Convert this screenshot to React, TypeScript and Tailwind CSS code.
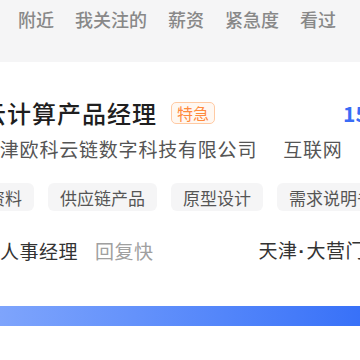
const tabs = ["附近", "我关注的", "薪资", "紧急度", "看过"];
const skills = ["产品资料", "供应链产品", "原型设计", "需求说明书"];

export default function App() {
  return (
    <div
      className="w-[360px] h-[360px] overflow-hidden bg-white"
      style={{ fontFamily: '"Noto Sans CJK SC", "Noto Sans", sans-serif' }}
    >
      {/* 顶部筛选栏 */}
      <div className="h-[62px] bg-[#f5f5f6]">
        <div className="flex items-center h-[38px] pl-[18px] gap-[21px] whitespace-nowrap">
          {tabs.map((t) => (
            <span key={t} className="text-[18px] font-medium text-[#888] leading-none">
              {t}
            </span>
          ))}
        </div>
      </div>

      {/* 职位卡片 */}
      <div className="flex flex-col whitespace-nowrap">
        <div className="flex items-center h-[34px] mt-[34px] ml-[-18px]">
          <span className="text-[24px] tracking-[1px] font-medium text-[#1f1f1f] leading-none">
            云计算产品经理
          </span>
          <span className="ml-[14px] h-[22px] px-[5px] flex items-center rounded-[5px] border border-[#ffcaa3] bg-[#fff8f2] text-[16px] leading-none text-[#ff8a3d]">
            特急
          </span>
          <span className="ml-[128px] text-[21px] font-semibold text-[#3a6cf6] leading-none">
            15-25K
          </span>
        </div>

        <div className="flex items-center h-[28px] mt-[4px] ml-[-20px] text-[19px] tracking-[0.8px] text-[#555] leading-none">
          <span>天津欧科云链数字科技有限公司</span>
          <span className="mx-[13px] w-px h-[14px] bg-[#dcdcdc]" />
          <span>互联网</span>
          <span className="mx-[13px] w-px h-[14px] bg-[#dcdcdc]" />
          <span>500-999人</span>
        </div>

        <div className="flex items-center gap-[14px] h-[28px] mt-[21px] ml-[-58px]">
          {skills.map((s) => (
            <span
              key={s}
              className="h-[28px] px-[12px] flex items-center rounded-[6px] bg-[#f5f5f6] text-[17px] text-[#555] leading-none"
            >
              {s}
            </span>
          ))}
        </div>

        <div className="flex items-center h-[28px] mt-[25px] text-[19px] leading-none">
          <span className="text-[#333] tracking-[0.5px]">人事经理</span>
          <span className="ml-[17px] text-[#a0a0a0] tracking-[0.5px]">回复快</span>
          <span className="ml-[105px] text-[#333] tracking-[0.5px]">
            天津
            <span className="font-['Liberation_Sans'] font-bold mx-[1px]">·</span>
            大营门
          </span>
        </div>

        <div className="mt-[42px] h-[20px] bg-gradient-to-r from-[#7ea4fc] to-[#3871f8]" />
      </div>
    </div>
  );
}
